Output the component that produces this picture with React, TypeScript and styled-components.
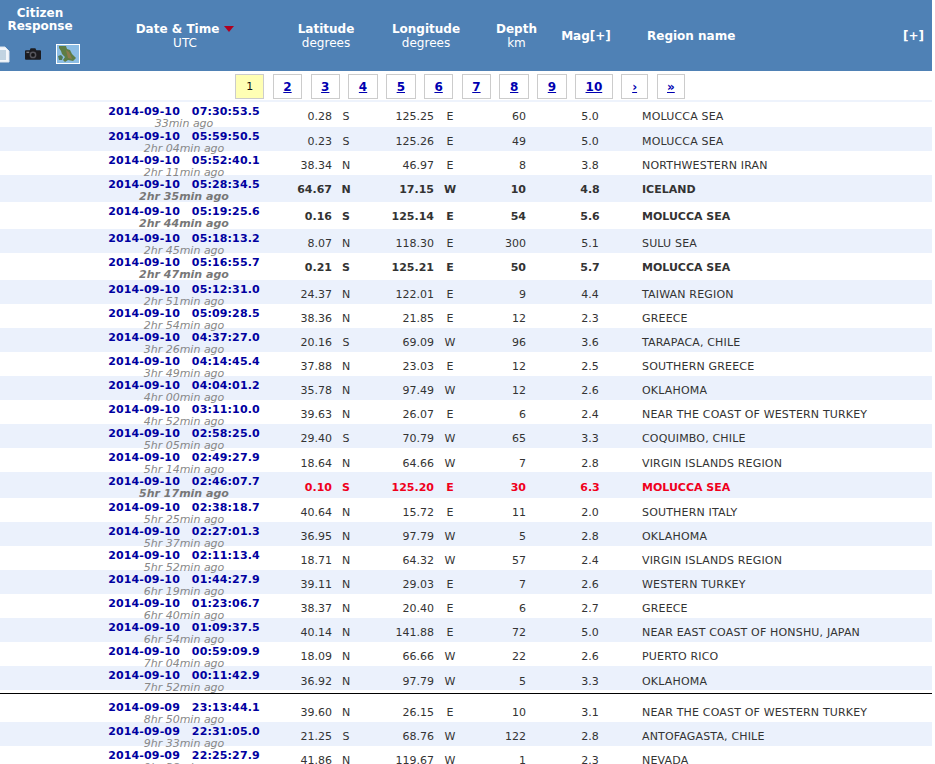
import React from 'react';
import styled, { createGlobalStyle } from 'styled-components';

const GlobalStyle = createGlobalStyle`
  html, body {
    margin: 0;
    padding: 0;
    height: 100%;
    overflow: hidden;
    background: #fff;
  }
  body {
    font-family: 'DejaVu Sans', Verdana, sans-serif;
    font-size: 11px;
    color: #333;
  }
`;

const Page = styled.div`
  width: 932px;
`;

const HeaderBar = styled.div`
  display: grid;
  grid-template-columns: 80px 210px 72px 128px 53px 86px 1fr 60px;
  height: 71px;
  background-color: #4f81b5;
  color: #fff;
  font-size: 12px;
  line-height: 14px;
`;

const CitizenCell = styled.div`
  display: flex;
  flex-direction: column;
  padding-top: 7px;
  font-weight: bold;
  line-height: 12.5px;
  text-align: center;
`;

const IconRow = styled.div`
  display: flex;
  align-items: center;
  height: 20px;
  margin-top: 12px;
  gap: 15px;
`;

const HeadCell = styled.div<{ $align?: string; $pad?: string }>`
  display: flex;
  flex-direction: column;
  justify-content: center;
  padding: ${props => props.$pad || '1px 0 0'};
  text-align: ${props => props.$align || 'center'};
  b {
    font-weight: bold;
  }
`;

const SortArrow = styled.span`
  display: inline-block;
  width: 0;
  height: 0;
  margin-left: 5px;
  vertical-align: 1px;
  border-left: 5px solid transparent;
  border-right: 5px solid transparent;
  border-top: 6px solid #b00020;
`;

const Pagination = styled.div`
  display: flex;
  gap: 8.4px;
  height: 31px;
  padding: 3px 0 0 235px;
  box-sizing: border-box;
  border-bottom: 2px solid #eef3fc;
`;

const PageLink = styled.a<{ $active?: boolean; $arrow?: boolean }>`
  display: flex;
  align-items: center;
  justify-content: center;
  box-sizing: border-box;
  height: 25px;
  padding: 0 9.5px;
  min-width: ${props => (props.$arrow ? '27px' : '29.4px')};
  border: 1px solid #ccc;
  color: ${props => (props.$active ? '#111' : '#0000b0')};
  background-color: ${props => (props.$active ? '#ffffb4' : '#fff')};
  font-size: ${props => (props.$active ? '11px' : '12px')};
  font-weight: ${props => (props.$active ? 'normal' : 'bold')};
  text-decoration: ${props => (props.$active ? 'none' : 'underline')};
`;

const rowHeight = (first: boolean, bold: boolean, red: boolean) => {
  if (first) return 25;
  if (red) return 25.2;
  return bold ? 26.8 : 24.1;
};

const Row = styled.div<{ $odd: boolean; $bold: boolean; $red: boolean; $first: boolean }>`
  display: grid;
  grid-template-columns: 100px 168px 64px 28px 74px 32px 74px 100px 1fr;
  align-items: center;
  height: ${props => rowHeight(props.$first, props.$bold, props.$red)}px;
  background-color: ${props => (props.$odd ? '#fff' : '#ebf1fc')};
  color: ${props => (props.$red ? '#f0001c' : '#333')};
  font-weight: ${props => (props.$bold ? 'bold' : 'normal')};
`;

const DateCell = styled.div`
  grid-column: 2;
  padding-top: 4px;
  text-align: center;
  white-space: pre;
`;

const DateLine = styled.div`
  color: #0000a0;
  font-weight: bold;
  letter-spacing: 0.14px;
  line-height: 12px;
`;

const AgoLine = styled.div<{ $bold: boolean }>`
  color: ${props => (props.$bold ? '#777' : '#888')};
  font-style: italic;
  line-height: 12.5px;
`;

const ValueCell = styled.div`
  text-align: right;
  padding-top: 1px;
`;

const DirCell = styled.div`
  text-align: center;
  padding-top: 1px;
`;

const DepthCell = styled(ValueCell)`
  padding-right: 14px;
`;

const MagCell = styled.div`
  text-align: center;
  padding-top: 1px;
`;

const RegionCell = styled.div<{ $bold: boolean }>`
  padding: 1px 0 0 2px;
  letter-spacing: ${props => (props.$bold ? '0' : '0.17px')};
  white-space: nowrap;
`;

const DayBreak = styled.div`
  box-sizing: border-box;
  height: 7.3px;
  padding-top: 3px;
  &::after {
    content: '';
    display: block;
    height: 1px;
    background-color: #000;
  }
`;

const DocIcon = () => (
  <svg width="16" height="17" viewBox="0 0 16 17" style={{ marginLeft: -6 }}>
    <path d="M1 1h10l4 4v11H1z" fill="#f4f7fb" stroke="#dfe6ee" />
    <path d="M3 5h9M3 7h9M3 9h9M3 11h9M3 13h9" stroke="#8fb0c8" />
    <path d="M3 5h2M3 9h2M3 13h2" stroke="#5aa06a" />
  </svg>
);

const CameraIcon = () => (
  <svg width="16" height="14" viewBox="0 0 17 14">
    <path d="M1 3h4l1-2h5l1 2h4a1 1 0 0 1 1 1v8a1 1 0 0 1-1 1H1a1 1 0 0 1-1-1V4a1 1 0 0 1 1-1z" fill="#1c1c20" />
    <circle cx="8.5" cy="8" r="3.6" fill="#55555c" />
    <circle cx="8.5" cy="8" r="2" fill="#141416" />
    <rect x="1.5" y="4.5" width="3" height="1.5" fill="#77777c" />
  </svg>
);

const MapIcon = () => (
  <svg width="24" height="20" viewBox="0 0 24 20">
    <rect width="24" height="20" fill="#fff" />
    <rect x="1" y="1" width="22" height="18" fill="#8cbde4" />
    <path d="M3 2h7l1 3 3 1 2 4 4 4-3 3-5-1-3 2-2-2 2-3-3-3-1-3-2-3z" fill="#5e7d45" />
    <path d="M10 6l3 2 2 4 1 3-4-1-1-4z" fill="#8d7a4c" />
    <path d="M2 12l3-1 2 2-1 3-3 0z" fill="#4f7a58" />
  </svg>
);

type Quake = {
  date: string;
  time: string;
  ago: string;
  lat: string;
  ns: string;
  lon: string;
  ew: string;
  depth: string;
  mag: string;
  region: string;
  bold?: boolean;
  red?: boolean;
};

const q = (
  date: string, time: string, ago: string, lat: string, ns: string, lon: string, ew: string,
  depth: string, mag: string, region: string, flag?: 'bold' | 'red',
): Quake => ({
  date, time, ago, lat, ns, lon, ew, depth, mag, region,
  bold: flag === 'bold' || flag === 'red',
  red: flag === 'red',
});

const D10 = '2014-09-10';
const D09 = '2014-09-09';

const firstBlock: Quake[] = [
  q(D10, '07:30:53.5', '33min ago', '0.28', 'S', '125.25', 'E', '60', '5.0', 'MOLUCCA SEA'),
  q(D10, '05:59:50.5', '2hr 04min ago', '0.23', 'S', '125.26', 'E', '49', '5.0', 'MOLUCCA SEA'),
  q(D10, '05:52:40.1', '2hr 11min ago', '38.34', 'N', '46.97', 'E', '8', '3.8', 'NORTHWESTERN IRAN'),
  q(D10, '05:28:34.5', '2hr 35min ago', '64.67', 'N', '17.15', 'W', '10', '4.8', 'ICELAND', 'bold'),
  q(D10, '05:19:25.6', '2hr 44min ago', '0.16', 'S', '125.14', 'E', '54', '5.6', 'MOLUCCA SEA', 'bold'),
  q(D10, '05:18:13.2', '2hr 45min ago', '8.07', 'N', '118.30', 'E', '300', '5.1', 'SULU SEA'),
  q(D10, '05:16:55.7', '2hr 47min ago', '0.21', 'S', '125.21', 'E', '50', '5.7', 'MOLUCCA SEA', 'bold'),
  q(D10, '05:12:31.0', '2hr 51min ago', '24.37', 'N', '122.01', 'E', '9', '4.4', 'TAIWAN REGION'),
  q(D10, '05:09:28.5', '2hr 54min ago', '38.36', 'N', '21.85', 'E', '12', '2.3', 'GREECE'),
  q(D10, '04:37:27.0', '3hr 26min ago', '20.16', 'S', '69.09', 'W', '96', '3.6', 'TARAPACA, CHILE'),
  q(D10, '04:14:45.4', '3hr 49min ago', '37.88', 'N', '23.03', 'E', '12', '2.5', 'SOUTHERN GREECE'),
  q(D10, '04:04:01.2', '4hr 00min ago', '35.78', 'N', '97.49', 'W', '12', '2.6', 'OKLAHOMA'),
  q(D10, '03:11:10.0', '4hr 52min ago', '39.63', 'N', '26.07', 'E', '6', '2.4', 'NEAR THE COAST OF WESTERN TURKEY'),
  q(D10, '02:58:25.0', '5hr 05min ago', '29.40', 'S', '70.79', 'W', '65', '3.3', 'COQUIMBO, CHILE'),
  q(D10, '02:49:27.9', '5hr 14min ago', '18.64', 'N', '64.66', 'W', '7', '2.8', 'VIRGIN ISLANDS REGION'),
  q(D10, '02:46:07.7', '5hr 17min ago', '0.10', 'S', '125.20', 'E', '30', '6.3', 'MOLUCCA SEA', 'red'),
  q(D10, '02:38:18.7', '5hr 25min ago', '40.64', 'N', '15.72', 'E', '11', '2.0', 'SOUTHERN ITALY'),
  q(D10, '02:27:01.3', '5hr 37min ago', '36.95', 'N', '97.79', 'W', '5', '2.8', 'OKLAHOMA'),
  q(D10, '02:11:13.4', '5hr 52min ago', '18.71', 'N', '64.32', 'W', '57', '2.4', 'VIRGIN ISLANDS REGION'),
  q(D10, '01:44:27.9', '6hr 19min ago', '39.11', 'N', '29.03', 'E', '7', '2.6', 'WESTERN TURKEY'),
  q(D10, '01:23:06.7', '6hr 40min ago', '38.37', 'N', '20.40', 'E', '6', '2.7', 'GREECE'),
  q(D10, '01:09:37.5', '6hr 54min ago', '40.14', 'N', '141.88', 'E', '72', '5.0', 'NEAR EAST COAST OF HONSHU, JAPAN'),
  q(D10, '00:59:09.9', '7hr 04min ago', '18.09', 'N', '66.66', 'W', '22', '2.6', 'PUERTO RICO'),
  q(D10, '00:11:42.9', '7hr 52min ago', '36.92', 'N', '97.79', 'W', '5', '3.3', 'OKLAHOMA'),
];

const secondBlock: Quake[] = [
  q(D09, '23:13:44.1', '8hr 50min ago', '39.60', 'N', '26.15', 'E', '10', '3.1', 'NEAR THE COAST OF WESTERN TURKEY'),
  q(D09, '22:31:05.0', '9hr 33min ago', '21.25', 'S', '68.76', 'W', '122', '2.8', 'ANTOFAGASTA, CHILE'),
  q(D09, '22:25:27.9', '9hr 38min ago', '41.86', 'N', '119.67', 'W', '1', '2.3', 'NEVADA'),
];

const pages = ['2', '3', '4', '5', '6', '7', '8', '9', '10'];

const QuakeRow: React.FC<{ quake: Quake; index: number }> = ({ quake, index }) => (
  <Row $odd={index % 2 === 0} $bold={!!quake.bold} $red={!!quake.red} $first={index === 0}>
    <DateCell>
      <DateLine>{quake.date}   {quake.time}</DateLine>
      <AgoLine $bold={!!quake.bold}>{quake.ago}</AgoLine>
    </DateCell>
    <ValueCell>{quake.lat}</ValueCell>
    <DirCell>{quake.ns}</DirCell>
    <ValueCell>{quake.lon}</ValueCell>
    <DirCell>{quake.ew}</DirCell>
    <DepthCell>{quake.depth}</DepthCell>
    <MagCell>{quake.mag}</MagCell>
    <RegionCell $bold={!!quake.bold}>{quake.region}</RegionCell>
  </Row>
);

const App: React.FC = () => (
  <Page>
    <GlobalStyle />
    <HeaderBar>
      <CitizenCell>
        <div>Citizen<br />Response</div>
        <IconRow>
          <DocIcon />
          <CameraIcon />
          <MapIcon />
        </IconRow>
      </CitizenCell>
      <HeadCell>
        <b>Date &amp; Time<SortArrow /></b>
        <span>UTC</span>
      </HeadCell>
      <HeadCell>
        <b>Latitude</b>
        <span>degrees</span>
      </HeadCell>
      <HeadCell>
        <b>Longitude</b>
        <span>degrees</span>
      </HeadCell>
      <HeadCell>
        <b>Depth</b>
        <span>km</span>
      </HeadCell>
      <HeadCell>
        <b>Mag[+]</b>
      </HeadCell>
      <HeadCell $align="left" $pad="1px 0 0 18px">
        <b>Region name</b>
      </HeadCell>
      <HeadCell $align="right" $pad="1px 8px 0 0">
        <b>[+]</b>
      </HeadCell>
    </HeaderBar>
    <Pagination>
      <PageLink $active>1</PageLink>
      {pages.map(label => (
        <PageLink key={label} href="#">{label}</PageLink>
      ))}
      <PageLink $arrow href="#">›</PageLink>
      <PageLink $arrow href="#">»</PageLink>
    </Pagination>
    {firstBlock.map((quake, i) => (
      <QuakeRow key={quake.time} quake={quake} index={i} />
    ))}
    <DayBreak />
    {secondBlock.map((quake, i) => (
      <QuakeRow key={quake.time} quake={quake} index={i + firstBlock.length} />
    ))}
  </Page>
);

export default App;
